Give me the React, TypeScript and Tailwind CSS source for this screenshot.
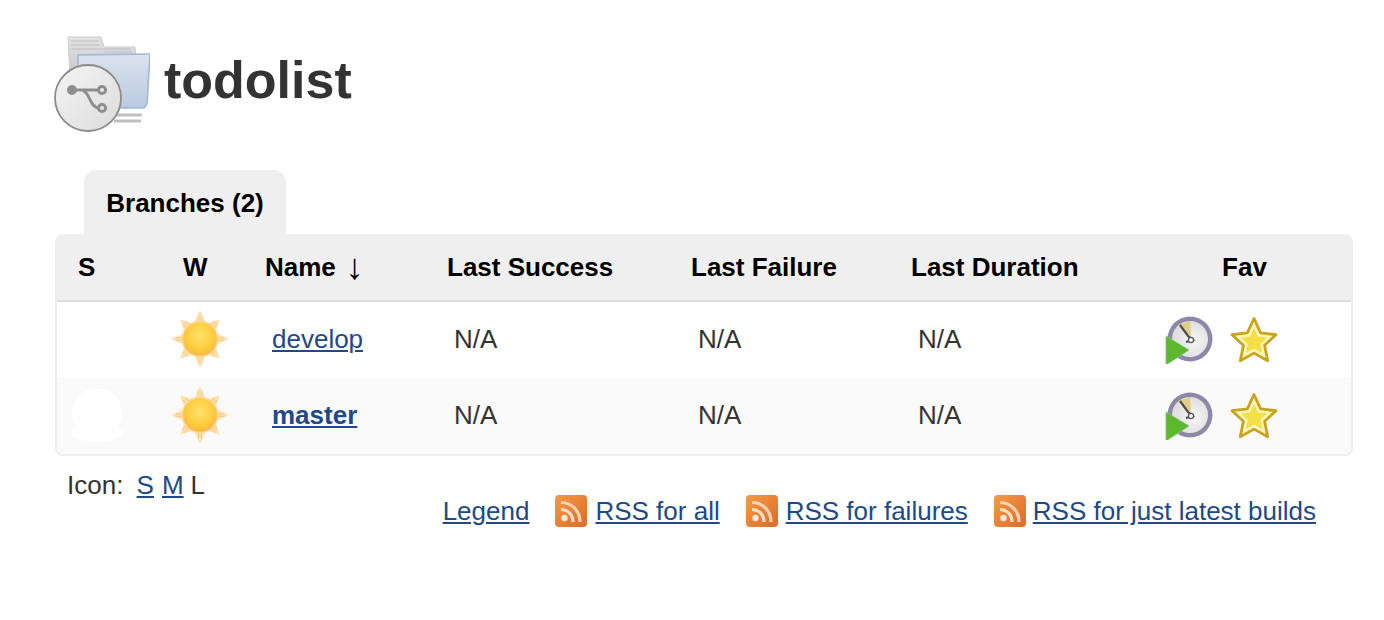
const FONT = "font-['Liberation_Sans',Arial,sans-serif]";

function FolderIcon() {
  return (
    <svg width="96" height="96" viewBox="0 0 96 96" className="shrink-0 blur-[0.6px]">
      <defs>
        <linearGradient id="fb" x1="0" y1="0" x2="0" y2="1">
          <stop offset="0" stopColor="#dbe3ed" />
          <stop offset="1" stopColor="#b9cbe0" />
        </linearGradient>
        <linearGradient id="cg" x1="0" y1="0" x2="1" y2="1">
          <stop offset="0" stopColor="#f4f4f4" />
          <stop offset="1" stopColor="#dcdcdc" />
        </linearGradient>
        <linearGradient id="pg" x1="0" y1="0" x2="0" y2="1">
          <stop offset="0" stopColor="#e2e2e2" />
          <stop offset="1" stopColor="#c8c8c8" />
        </linearGradient>
      </defs>
      <path d="M14 1h33l3 10h31l2 30H16z" fill="url(#pg)" stroke="#cdcdcd" />
      <path d="M17 5h28M17 9h28M17 13h60M50 16h28" stroke="#bdbdbd" strokeWidth="1" />
      <path d="M24 19l72-1-3 50-3 4H24z" fill="url(#fb)" stroke="#9cb8d8" strokeWidth="1.6" />
      <path d="M60 79h28M60 85h27" stroke="#bfbfbf" strokeWidth="3.2" />
      <circle cx="34" cy="62" r="33" fill="url(#cg)" stroke="#8c8c8c" strokeWidth="1.8" />
      <g fill="none" stroke="#8e8e8e" strokeWidth="3">
        <path d="M20 54c8 0 14 0 24 0" />
        <path d="M29 55c7 1 6 15 15 17" />
        <circle cx="48" cy="54" r="3.6" />
        <circle cx="48" cy="72" r="3.6" />
      </g>
      <circle cx="18" cy="54" r="5" fill="#8e8e8e" />
    </svg>
  );
}

function Sun({ id }: { id: string }) {
  const rays = [0, 45, 90, 135, 180, 225, 270, 315];
  return (
    <svg width="60" height="60" viewBox="0 0 60 60" className="blur-[0.5px]">
      <defs>
        <radialGradient id={id} cx="0.5" cy="0.4" r="0.6">
          <stop offset="0" stopColor="#ffe36a" />
          <stop offset="0.7" stopColor="#fdcb3c" />
          <stop offset="1" stopColor="#f8b844" />
        </radialGradient>
      </defs>
      {rays.map((r) => (
        <g key={r} transform={`rotate(${r} 30 30)`}>
          <path d={r % 90 === 0 ? "M30 1l-5.5 12h11z" : "M30 2l-6.5 13h13z"} fill="#fde2ae" />
          <path d={r % 90 === 0 ? "M28.6 6v7M31.4 6v7" : "M28.4 7v8M31.6 7v8"} stroke="#fbce8a" strokeWidth="1.2" />
        </g>
      ))}
      <circle cx="30" cy="30" r="18.4" fill="#fcd79a" />
      <circle cx="30" cy="30" r="16.8" fill={`url(#${id})`} />
    </svg>
  );
}

function BuildIcon() {
  return (
    <svg width="48" height="48" viewBox="0 0 48 48" className="blur-[0.6px]">
      <defs>
        <radialGradient id="face" cx="0.6" cy="0.55" r="0.6">
          <stop offset="0" stopColor="#f6f6f6" />
          <stop offset="1" stopColor="#dcdcdc" />
        </radialGradient>
      </defs>
      <circle cx="25" cy="23" r="22.5" fill="#8d88aa" />
      <circle cx="25" cy="23" r="18" fill="url(#face)" />
      <path d="M13 9l12-4 1 16z" fill="#e2cd85" />
      <path d="M15 9l8 11 5 4-7 2" stroke="#4f4d49" strokeWidth="2.2" fill="none" />
      <circle cx="26" cy="24" r="2.6" fill="#f4f4f4" stroke="#555" strokeWidth="1.2" />
      <path d="M1 20v29l23-15z" fill="#5cb82d" stroke="#8fc27a" strokeWidth="0.8" />
    </svg>
  );
}

function Star() {
  return (
    <svg width="48" height="48" viewBox="0 0 48 48" className="blur-[0.4px]">
      <path
        d="M24 2.5l6.6 14.4 15.4 1.8-11.4 10.6 3.1 15.5L24 37.1 10.3 44.8l3.1-15.5L2 18.7l15.4-1.8z"
        fill="#fdf6b8"
        stroke="#c8a31f"
        strokeWidth="2.8"
        strokeLinejoin="round"
      />
      <path
        d="M24 12l3.9 8.6 9.3 1-6.9 6.3 1.9 9.2-8.2-4.7-8.2 4.7 1.9-9.2-6.9-6.3 9.3-1z"
        fill="#f4df48"
      />
    </svg>
  );
}

function Rss() {
  return (
    <svg width="32" height="32" viewBox="0 0 32 32" className="shrink-0 blur-[0.4px]">
      <defs>
        <linearGradient id="rg" x1="0" y1="0" x2="1" y2="1">
          <stop offset="0" stopColor="#f59a45" />
          <stop offset="1" stopColor="#dd6b2a" />
        </linearGradient>
      </defs>
      <rect width="32" height="32" rx="4" fill="url(#rg)" />
      <circle cx="9.5" cy="23" r="3.2" fill="#fde9d8" />
      <path d="M6 14.5c6.5 0 12 5 12 12.5" fill="none" stroke="#fde0c8" strokeWidth="3.2" />
      <path d="M6 7.5c11 0 19 8.5 19 19.5" fill="none" stroke="#fbd3b3" strokeWidth="3.2" />
    </svg>
  );
}

function Blob() {
  return (
    <svg width="54" height="54" viewBox="0 0 54 54" className="blur-[0.5px]">
      <circle cx="27" cy="24" r="25" fill="#ffffff" />
      <ellipse cx="27" cy="44" rx="26" ry="9" fill="#ffffff" />
    </svg>
  );
}

const COLS = "grid grid-cols-[107px_86px_182px_244px_220px_240px_217px]";

function Row({ name, bold, shaded }: { name: string; bold?: boolean; shaded?: boolean }) {
  return (
    <div className={`${COLS} h-[76px] items-center ${shaded ? "bg-[#fafafa]" : "bg-white"}`}>
      <div className="pl-[13px]">{shaded ? <Blob /> : null}</div>
      <div className="pl-[6px] -mt-[2px]">
        <Sun id={`sun-${name}`} />
      </div>
      <div className="pl-[22px] -mt-[2px]">
        <a className={`text-[#204a87] underline ${bold ? "font-bold" : ""}`} href="#">
          {name}
        </a>
      </div>
      <div className="pl-[22px] -mt-[2px]">N/A</div>
      <div className="pl-[22px] -mt-[2px]">N/A</div>
      <div className="pl-[22px] -mt-[2px]">N/A</div>
      <div className="flex items-center gap-[17px] pl-[29px]">
        <BuildIcon />
        <Star />
      </div>
    </div>
  );
}

export default function App() {
  return (
    <div className={`${FONT} w-[1384px] h-[620px] bg-white pl-[55px] pr-[31px] pt-[36px] text-[26px] leading-[30px] text-[#333333] overflow-hidden`}>
      <div className="flex items-center gap-[14px] -ml-[1px] h-[96px]">
        <FolderIcon />
        <h1 className="text-[52px] leading-[60px] font-bold text-[#333333] -mt-[8px]">todolist</h1>
      </div>

      <div className="mt-[38px] ml-[29px] w-[202px] h-[64px] bg-[#efefef] rounded-t-[12px] flex items-center justify-center font-bold text-black pt-[2px]">
        Branches (2)
      </div>

      <div className="border-2 border-t-0 border-[#efefef] rounded-[8px] overflow-hidden">
        <div className={`${COLS} h-[68px] items-center bg-[#efefef] border-b-2 border-[#dddddd] font-bold text-black`}>
          <div className="pl-[21px]">S</div>
          <div className="pl-[19px]">W</div>
          <div className="pl-[15px] flex items-center gap-[10px]">
            Name <span className="font-normal text-[36px] leading-[30px]">↓</span>
          </div>
          <div className="pl-[15px]">Last Success</div>
          <div className="pl-[15px]">Last Failure</div>
          <div className="pl-[15px]">Last Duration</div>
          <div className="text-center">Fav</div>
        </div>
        <Row name="develop" />
        <Row name="master" bold shaded />
      </div>

      <div className="flex justify-between items-start pl-[12px] pr-[37px]">
        <div className="mt-[14px] flex whitespace-pre">
          <span className="mr-[6px]">Icon: </span>
          <a href="#" className="text-[#204a87] underline mr-[8px]">S</a>
          <a href="#" className="text-[#204a87] underline mr-[7px]">M</a>
          <span>L</span>
        </div>
        <div className="mt-[39px] flex items-center text-[#204a87]">
          <a href="#" className="underline">Legend</a>
          <div className="ml-[26px] mr-[8px]"><Rss /></div>
          <a href="#" className="underline">RSS for all</a>
          <div className="ml-[26px] mr-[8px]"><Rss /></div>
          <a href="#" className="underline">RSS for failures</a>
          <div className="ml-[26px] mr-[7px]"><Rss /></div>
          <a href="#" className="underline">RSS for just latest builds</a>
        </div>
      </div>
    </div>
  );
}
